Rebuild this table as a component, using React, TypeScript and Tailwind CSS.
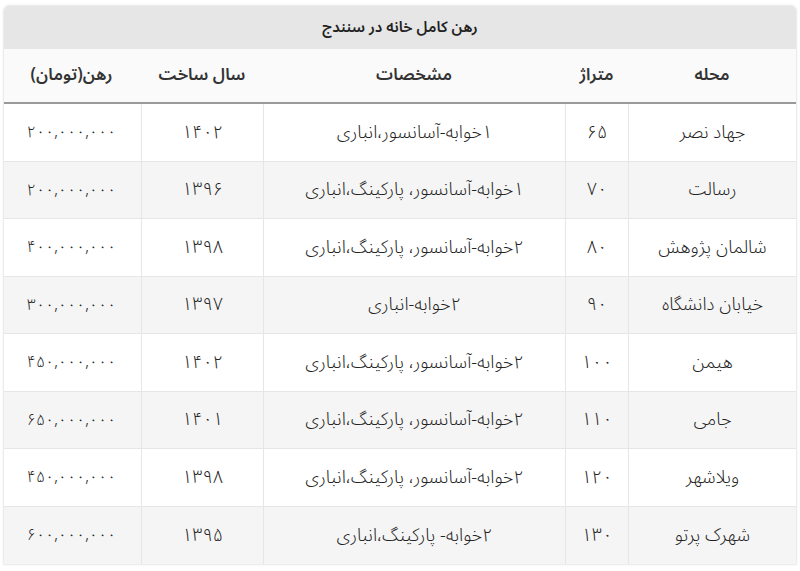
const rows = [
  { area: "جهاد نصر", size: "۶۵", spec: "۱خوابه-آسانسور،انباری", year: "۱۴۰۲", price: "۲۰۰,۰۰۰,۰۰۰" },
  { area: "رسالت", size: "۷۰", spec: "۱خوابه-آسانسور، پارکینگ،انباری", year: "۱۳۹۶", price: "۲۰۰,۰۰۰,۰۰۰" },
  { area: "شالمان پژوهش", size: "۸۰", spec: "۲خوابه-آسانسور، پارکینگ،انباری", year: "۱۳۹۸", price: "۴۰۰,۰۰۰,۰۰۰" },
  { area: "خیابان دانشگاه", size: "۹۰", spec: "۲خوابه-انباری", year: "۱۳۹۷", price: "۳۰۰,۰۰۰,۰۰۰" },
  { area: "هیمن", size: "۱۰۰", spec: "۲خوابه-آسانسور، پارکینگ،انباری", year: "۱۴۰۲", price: "۴۵۰,۰۰۰,۰۰۰" },
  { area: "جامی", size: "۱۱۰", spec: "۲خوابه-آسانسور، پارکینگ،انباری", year: "۱۴۰۱", price: "۶۵۰,۰۰۰,۰۰۰" },
  { area: "ویلاشهر", size: "۱۲۰", spec: "۲خوابه-آسانسور، پارکینگ،انباری", year: "۱۳۹۸", price: "۴۵۰,۰۰۰,۰۰۰" },
  { area: "شهرک پرتو", size: "۱۳۰", spec: "۲خوابه- پارکینگ،انباری", year: "۱۳۹۵", price: "۶۰۰,۰۰۰,۰۰۰" },
];

const cols = "grid grid-cols-[168px_63px_302px_122px_139px]";

export default function App() {
  return (
    <div className="w-[800px] h-[571px] bg-white pt-[5px] px-[3px]">
      <div
        dir="rtl"
        className="w-[794px] rounded-t-md border border-[#ececec] shadow-[0_0_3px_rgba(0,0,0,0.06)] overflow-hidden text-[#333] font-['Noto_Sans_Arabic','DejaVu_Sans',sans-serif]"
      >
        {/* title */}
        <div className="h-[43px] bg-[#e6e6e6] flex items-center justify-center text-[15px] font-semibold text-[#222]">
          رهن کامل خانه در سنندج
        </div>

        {/* header */}
        <div className={`${cols} h-[55px] bg-[#fafafa] border-b-[2px] border-[#9a9a9a] text-[17px] font-semibold text-[#333]`}>
          {["محله", "متراژ", "مشخصات", "سال ساخت", "رهن(تومان)"].map((h) => (
            <div key={h} className="flex items-center justify-center">
              {h}
            </div>
          ))}
        </div>

        {/* rows */}
        {rows.map((r, i) => (
          <div
            key={r.area}
            className={`${cols} h-[57.5px] text-[18px] font-light text-[#222] ${i % 2 ? "bg-[#f5f5f5]" : "bg-white"} ${i < rows.length - 1 ? "border-b border-[#e6e6e6]" : ""}`}
          >
            <div className="flex items-center justify-center border-l border-[#e6e6e6]">{r.area}</div>
            <div className="flex items-center justify-center border-l border-[#e6e6e6]">{r.size}</div>
            <div className="flex items-center justify-center border-l border-[#e6e6e6]">{r.spec}</div>
            <div className="flex items-center justify-center border-l border-[#e6e6e6]">{r.year}</div>
            <div className="flex items-center justify-center text-[16px]">{r.price}</div>
          </div>
        ))}
      </div>
    </div>
  );
}
